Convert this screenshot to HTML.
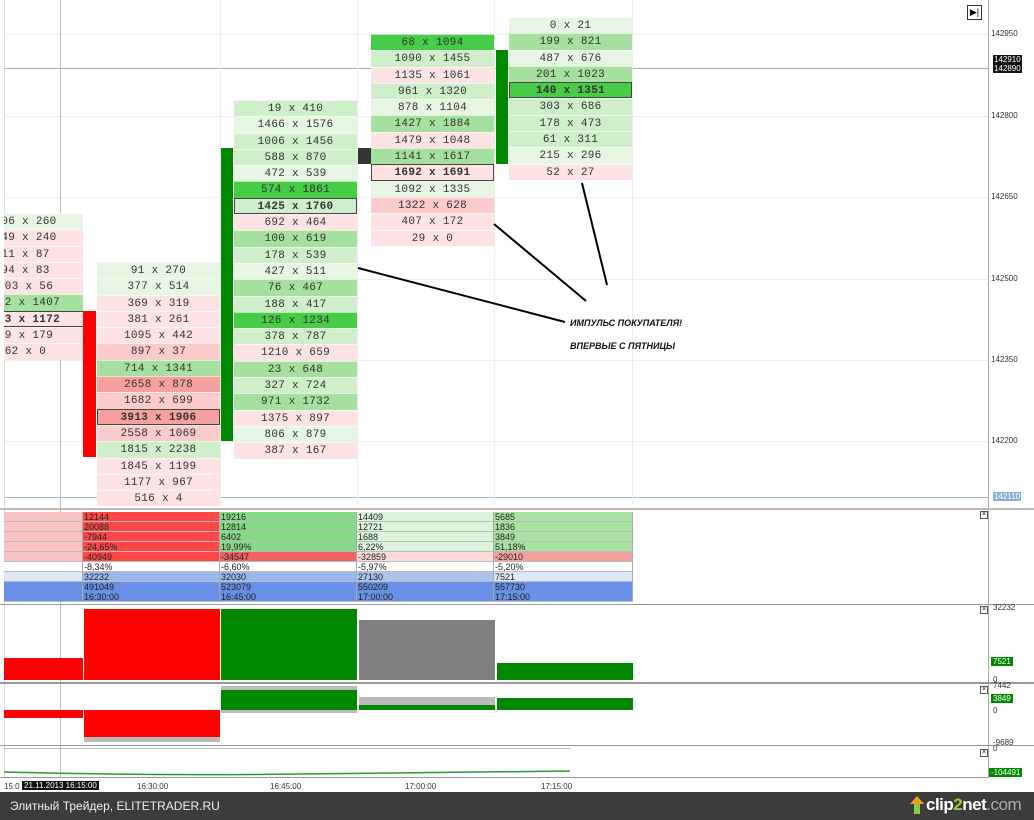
<!DOCTYPE html>
<html><head><meta charset="utf-8"><style>
*{margin:0;padding:0;box-sizing:border-box}
body{width:1034px;height:820px;position:relative;overflow:hidden;background:#fff;font-family:"Liberation Sans","DejaVu Sans",sans-serif}
.a{position:absolute}
.col{position:absolute;width:123px}
.col div{height:16.3px;line-height:16.3px;text-align:center;font-family:"Liberation Mono",monospace;font-size:11px;color:#333;letter-spacing:0.3px;border-top:1px solid rgba(255,255,255,.6)}
.g1{background:#e6f6e2}.g2{background:#cfeeca}.g3{background:#a6e09e}.g4{background:#46cc46}
.r1{background:#fde3e3}.r2{background:#fbcaca}.r3{background:#f7a0a0}
.b{font-weight:bold;outline:1px solid #444;outline-offset:-1px;color:#111}
.t div{position:absolute;height:10px;font-size:9px;line-height:10px;color:#222;padding-left:1px;border-right:1px solid #aaa;border-bottom:1px solid #bbb}
.ax{position:absolute;font-size:8px;color:#333}
</style></head><body>
<div class="a" style="left:4px;top:34px;width:984px;height:1px;background:#eee"></div>
<div class="a" style="left:4px;top:116px;width:984px;height:1px;background:#eee"></div>
<div class="a" style="left:4px;top:197px;width:984px;height:1px;background:#eee"></div>
<div class="a" style="left:4px;top:279px;width:984px;height:1px;background:#eee"></div>
<div class="a" style="left:4px;top:360px;width:984px;height:1px;background:#eee"></div>
<div class="a" style="left:4px;top:441px;width:984px;height:1px;background:#eee"></div>
<div class="a" style="left:4px;top:68px;width:984px;height:1px;background:#aaa"></div>
<div class="a" style="left:4px;top:497px;width:984px;height:1px;background:#9ab8d8"></div>
<div class="a" style="left:357px;top:0;width:1px;height:505px;background:#eee"></div>
<div class="a" style="left:494px;top:0;width:1px;height:505px;background:#eee"></div>
<div class="a" style="left:632px;top:0;width:1px;height:505px;background:#eee"></div>
<div class="a" style="left:220px;top:0;width:1px;height:505px;background:#eee"></div>
<div class="a" style="left:60px;top:0;width:1px;height:778px;background:#bbb"></div>
<div class="a" style="left:988px;top:0;width:1px;height:778px;background:#aaa"></div>
<div class="a" style="left:4px;top:0;width:1px;height:778px;background:#ddd"></div>
<div class="ax" style="left:991px;top:29px">142950</div>
<div class="ax" style="left:991px;top:111px">142800</div>
<div class="ax" style="left:991px;top:192px">142650</div>
<div class="ax" style="left:991px;top:274px">142500</div>
<div class="ax" style="left:991px;top:355px">142350</div>
<div class="ax" style="left:991px;top:436px">142200</div>
<div class="ax" style="left:993px;top:55px;background:#111;color:#fff;padding:0 1px">142910</div>
<div class="ax" style="left:993px;top:64px;background:#111;color:#fff;padding:0 1px">142890</div>
<div class="ax" style="left:993px;top:492px;background:#8ab0d8;color:#fff;padding:0 1px">142110</div>
<div class="a" style="left:967px;top:5px;width:15px;height:15px;border:1px solid #333;font-size:9px;line-height:13px;text-align:center">▶|</div>
<div class="col" style="left:-36px;top:213px">
<div class="g1">106 x 260</div><div class="r1">549 x 240</div><div class="r1">11 x 87</div><div class="r1">94 x 83</div><div class="r1">103 x 56</div><div class="g3">162 x 1407</div><div class="r1 b">103 x 1172</div><div class="r1">19 x 179</div><div class="r1">62 x 0</div></div>
<div class="a" style="left:0;top:200px;width:4px;height:170px;background:#fff"></div>
<div class="a" style="left:83px;top:200px;width:14px;height:170px;background:#fff"></div>
<div class="col" style="left:97px;top:262px">
<div class="g1">91 x 270</div><div class="g1">377 x 514</div><div class="r1">369 x 319</div><div class="r1">381 x 261</div><div class="r1">1095 x 442</div><div class="r2">897 x 37</div><div class="g3">714 x 1341</div><div class="r3">2658 x 878</div><div class="r2">1682 x 699</div><div class="r3 b">3913 x 1906</div><div class="r2">2558 x 1069</div><div class="g2">1815 x 2238</div><div class="r1">1845 x 1199</div><div class="r1">1177 x 967</div><div class="r1">516 x 4</div></div>
<div class="col" style="left:234px;top:100px">
<div class="g2">19 x 410</div><div class="g1">1466 x 1576</div><div class="g2">1006 x 1456</div><div class="g2">588 x 870</div><div class="g1">472 x 539</div><div class="g4">574 x 1861</div><div class="g2 b">1425 x 1760</div><div class="r1">692 x 464</div><div class="g3">100 x 619</div><div class="g2">178 x 539</div><div class="g1">427 x 511</div><div class="g3">76 x 467</div><div class="g2">188 x 417</div><div class="g4">126 x 1234</div><div class="g2">378 x 787</div><div class="r1">1210 x 659</div><div class="g3">23 x 648</div><div class="g2">327 x 724</div><div class="g3">971 x 1732</div><div class="r1">1375 x 897</div><div class="g1">806 x 879</div><div class="r1">387 x 167</div></div>
<div class="col" style="left:371px;top:34px">
<div class="g4">68 x 1094</div><div class="g2">1090 x 1455</div><div class="r1">1135 x 1061</div><div class="g2">961 x 1320</div><div class="g1">878 x 1104</div><div class="g3">1427 x 1884</div><div class="r1">1479 x 1048</div><div class="g3">1141 x 1617</div><div class="r1 b">1692 x 1691</div><div class="g1">1092 x 1335</div><div class="r2">1322 x 628</div><div class="r1">407 x 172</div><div class="r1">29 x 0</div></div>
<div class="col" style="left:509px;top:17px">
<div class="g1">0 x 21</div><div class="g3">199 x 821</div><div class="g1">487 x 676</div><div class="g3">201 x 1023</div><div class="g4 b">140 x 1351</div><div class="g2">303 x 686</div><div class="g2">178 x 473</div><div class="g2">61 x 311</div><div class="g1">215 x 296</div><div class="r1">52 x 27</div></div>
<div class="a" style="left:83px;top:311px;width:13px;height:146px;background:#f00"></div>
<div class="a" style="left:221px;top:148px;width:12px;height:293px;background:#080"></div>
<div class="a" style="left:358px;top:148px;width:13px;height:16px;background:#333"></div>
<div class="a" style="left:496px;top:50px;width:12px;height:114px;background:#080"></div>
<svg class="a" style="left:0;top:0" width="1034" height="510"><g stroke="#000" stroke-width="2"><line x1="358" y1="268" x2="565" y2="322"/><line x1="494" y1="224" x2="586" y2="301"/><line x1="582" y1="183" x2="607" y2="285"/></g></svg>
<div class="a" style="left:570px;top:318px;font-size:9px;font-style:italic;font-weight:bold;color:#111">ИМПУЛЬС ПОКУПАТЕЛЯ!</div>
<div class="a" style="left:570px;top:341px;font-size:9px;font-style:italic;font-weight:bold;color:#111">ВПЕРВЫЕ С ПЯТНИЦЫ</div>
<div class="a" style="left:0;top:508px;width:1034px;height:2px;background:#bbb"></div>
<div class="a" style="left:980px;top:511px;width:8px;height:8px;border:1px solid #555;font-size:7px;line-height:6px;text-align:center">×</div>
<div class="t">
<div style="left:4px;top:512px;width:79px;background:#f9c3c3"></div><div style="left:83px;top:512px;width:137px;background:#ff4646">12144</div><div style="left:220px;top:512px;width:137px;background:#86da86">19216</div><div style="left:357px;top:512px;width:137px;background:#dcf4dc">14409</div><div style="left:494px;top:512px;width:139px;background:#a8e2a0">5685</div>
<div style="left:4px;top:522px;width:79px;background:#f9c3c3"></div><div style="left:83px;top:522px;width:137px;background:#ff4646">20088</div><div style="left:220px;top:522px;width:137px;background:#86da86">12814</div><div style="left:357px;top:522px;width:137px;background:#dcf4dc">12721</div><div style="left:494px;top:522px;width:139px;background:#a8e2a0">1836</div>
<div style="left:4px;top:532px;width:79px;background:#f9c3c3"></div><div style="left:83px;top:532px;width:137px;background:#ff4646">-7944</div><div style="left:220px;top:532px;width:137px;background:#86da86">6402</div><div style="left:357px;top:532px;width:137px;background:#dcf4dc">1688</div><div style="left:494px;top:532px;width:139px;background:#a8e2a0">3849</div>
<div style="left:4px;top:542px;width:79px;background:#f9c3c3"></div><div style="left:83px;top:542px;width:137px;background:#ff4646">-24,65%</div><div style="left:220px;top:542px;width:137px;background:#86da86">19,99%</div><div style="left:357px;top:542px;width:137px;background:#dcf4dc">6,22%</div><div style="left:494px;top:542px;width:139px;background:#a8e2a0">51,18%</div>
<div style="left:4px;top:552px;width:79px;background:#f9c3c3"></div><div style="left:83px;top:552px;width:137px;background:#ff4646">-40949</div><div style="left:220px;top:552px;width:137px;background:#f26262">-34547</div><div style="left:357px;top:552px;width:137px;background:#fdd8d8">-32859</div><div style="left:494px;top:552px;width:139px;background:#f4a0a0">-29010</div>
<div style="left:4px;top:562px;width:79px;background:#fff"></div><div style="left:83px;top:562px;width:137px;background:#fff">-8,34%</div><div style="left:220px;top:562px;width:137px;background:#fff">-6,60%</div><div style="left:357px;top:562px;width:137px;background:#fff">-5,97%</div><div style="left:494px;top:562px;width:139px;background:#fff">-5,20%</div>
<div style="left:4px;top:572px;width:79px;background:#dde7f8"></div><div style="left:83px;top:572px;width:137px;background:#9bb8ee">32232</div><div style="left:220px;top:572px;width:137px;background:#9bb8ee">32030</div><div style="left:357px;top:572px;width:137px;background:#a9c2f0">27130</div><div style="left:494px;top:572px;width:139px;background:#dde7f8">7521</div>
<div style="left:4px;top:582px;width:79px;background:#6890e6;border-bottom:none"></div><div style="left:83px;top:582px;width:137px;background:#6890e6;border-bottom:none">491049</div><div style="left:220px;top:582px;width:137px;background:#6890e6;border-bottom:none">523079</div><div style="left:357px;top:582px;width:137px;background:#6890e6;border-bottom:none">550209</div><div style="left:494px;top:582px;width:139px;background:#6890e6;border-bottom:none">557730</div>
<div style="left:4px;top:592px;width:79px;background:#6890e6"></div><div style="left:83px;top:592px;width:137px;background:#6890e6">16:30:00</div><div style="left:220px;top:592px;width:137px;background:#6890e6">16:45:00</div><div style="left:357px;top:592px;width:137px;background:#6890e6">17:00:00</div><div style="left:494px;top:592px;width:139px;background:#6890e6">17:15:00</div>
</div>
<div class="a" style="left:0;top:604px;width:1034px;height:1px;background:#999"></div>
<div class="a" style="left:4px;top:658px;width:79px;height:22px;background:#f00"></div>
<div class="a" style="left:84px;top:609px;width:136px;height:71px;background:#f00"></div>
<div class="a" style="left:221px;top:609px;width:136px;height:71px;background:#080"></div>
<div class="a" style="left:359px;top:620px;width:136px;height:60px;background:#808080"></div>
<div class="a" style="left:497px;top:663px;width:136px;height:17px;background:#080"></div>
<div class="a" style="left:980px;top:606px;width:8px;height:8px;border:1px solid #555;font-size:7px;line-height:6px;text-align:center">×</div>
<div class="ax" style="left:993px;top:603px">32232</div>
<div class="ax" style="left:991px;top:657px;background:#080;color:#fff;padding:0 2px">7521</div>
<div class="ax" style="left:993px;top:675px">0</div>
<div class="a" style="left:0;top:682px;width:1034px;height:2px;background:#999"></div>
<div class="a" style="left:4px;top:710px;width:79px;height:8px;background:#f00"></div>
<div class="a" style="left:84px;top:710px;width:136px;height:27px;background:#f00"></div>
<div class="a" style="left:84px;top:737px;width:136px;height:5px;background:#bbb"></div>
<div class="a" style="left:221px;top:686px;width:136px;height:4px;background:#bbb"></div>
<div class="a" style="left:221px;top:690px;width:136px;height:20px;background:#080"></div>
<div class="a" style="left:221px;top:710px;width:136px;height:3px;background:#bbb"></div>
<div class="a" style="left:359px;top:697px;width:136px;height:8px;background:#bbb"></div>
<div class="a" style="left:359px;top:705px;width:136px;height:5px;background:#080"></div>
<div class="a" style="left:497px;top:698px;width:136px;height:12px;background:#080"></div>
<div class="a" style="left:980px;top:686px;width:8px;height:8px;border:1px solid #555;font-size:7px;line-height:6px;text-align:center">×</div>
<div class="ax" style="left:993px;top:681px">7442</div>
<div class="ax" style="left:991px;top:694px;background:#080;color:#fff;padding:0 2px">3849</div>
<div class="ax" style="left:993px;top:706px">0</div>
<div class="ax" style="left:993px;top:738px">-9689</div>
<div class="a" style="left:0;top:745px;width:1034px;height:1px;background:#999"></div>
<div class="a" style="left:4px;top:748px;width:566px;height:1px;background:#bbb"></div>
<svg class="a" style="left:0;top:746px" width="988" height="32"><path d="M4 26 Q150 30 300 28 T570 25" stroke="#2a9a2a" stroke-width="1.5" fill="none"/></svg>
<div class="a" style="left:980px;top:749px;width:8px;height:8px;border:1px solid #555;font-size:7px;line-height:6px;text-align:center">×</div>
<div class="ax" style="left:993px;top:744px">0</div>
<div class="ax" style="left:989px;top:768px;background:#080;color:#fff;padding:0 2px">-104491</div>
<div class="a" style="left:0;top:777px;width:988px;height:1px;background:#999"></div>
<div class="ax" style="left:4px;top:782px">15:0</div>
<div class="ax" style="left:22px;top:781px;background:#111;color:#fff;padding:0 2px">21.11.2013 16:15:00</div>
<div class="ax" style="left:137px;top:782px">16:30:00</div>
<div class="ax" style="left:270px;top:782px">16:45:00</div>
<div class="ax" style="left:405px;top:782px">17:00:00</div>
<div class="ax" style="left:541px;top:782px">17:15:00</div>
<div class="a" style="left:0;top:792px;width:1034px;height:28px;background:#3c3c3c"></div>
<div class="a" style="left:10px;top:799px;color:#eee;font-size:12px">Элитный Трейдер, ELITETRADER.RU</div>
<div class="a" style="left:910px;top:796px;width:14px;height:18px;"><div style="width:0;height:0;border-left:7px solid transparent;border-right:7px solid transparent;border-bottom:8px solid #f0a020"></div><div style="margin-left:4px;width:6px;height:10px;background:#8c4"></div></div>
<div class="a" style="left:926px;top:795px;color:#fff;font-size:17px;font-weight:bold;letter-spacing:-0.5px">clip<span style="color:#9c3">2</span>net<span style="color:#aaa;font-weight:normal">.com</span></div>
</body></html>
